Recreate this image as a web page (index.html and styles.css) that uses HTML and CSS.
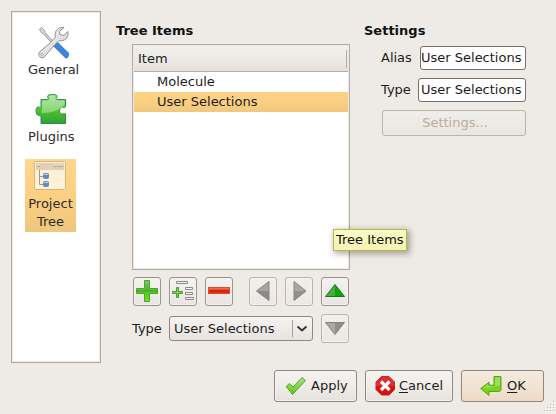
FILE: index.html
```html
<!DOCTYPE html>
<html lang="en">
<head>
<meta charset="utf-8">
<title>Settings</title>
<link rel="stylesheet" href="styles.css">
</head>
<body>
<div class="dialog">
  <div class="content">
    <nav class="sidebar">
      <div class="nav-item">
        <svg width="32" height="32" viewBox="0 0 32 32">
          <defs>
            <linearGradient id="blue" x1="0" y1="1" x2="1" y2="0"><stop offset="0" stop-color="#174f96"/><stop offset=".5" stop-color="#3c8be0"/><stop offset="1" stop-color="#2464b4"/></linearGradient>
            <linearGradient id="steel" x1="0" y1="0" x2="1" y2="1"><stop offset="0" stop-color="#f8f8f8"/><stop offset="1" stop-color="#cfcfcf"/></linearGradient>
          </defs>
          <path d="M3.500 0.500L1.500 2.200L3.500 5.500L5.500 6.700L15 17.500L16.500 16L7 5.500L6 3Z" fill="#ddd" stroke="#8c8c8c" stroke-width=".9"/>
          <path d="M14.500 18L18.500 14.300L30.500 26Q31.500 29 29 31L27.500 31Z" fill="url(#blue)" stroke="#2a68b0" stroke-width=".6"/>
          <path d="M26 .7C21 -.5 15.500 4 17.500 10L12 16L1.500 25C-1 28.500 3 32.500 6.300 29.800L16 18.500L21 13.500C26.500 15 31.500 10 29.700 4.500L26 8.500L21.800 7.500L21.500 4Z" fill="url(#steel)" stroke="#919191"/>
          <circle cx="4" cy="27.500" r="1.300" fill="#eee" stroke="#999" stroke-width=".7"/>
        </svg>
        <span>General</span>
      </div>
      <div class="nav-item">
        <svg width="32" height="32" viewBox="0 0 32 32">
          <defs><linearGradient id="puz" x1="0" y1="0" x2="0" y2="1"><stop offset="0" stop-color="#8fd98a"/><stop offset=".5" stop-color="#54c432"/><stop offset="1" stop-color="#2ca03a"/></linearGradient></defs>
          <path d="M6 5.500H12C15 5.500 12.500 4 12.500 2.500C13 -.5 22 -.5 22 2.500C22 4 20 5.500 22.500 5.500H30.500V12.500C29.500 14.500 28 12.700 26.500 13.200C24 14.500 24 19 26.500 20C28.500 20.500 29.500 18.700 30.500 20V29.500H6V22C5 20.500 3 22.500 1.700 20C.5 17 .8 13.500 3 13C5 12.700 5.500 14.500 6 13.500Z" fill="url(#puz)" stroke="#2a9034"/>
          <path d="M7 6.500H13C16 5.500 13 3 15 2C19 .8 21.500 2 20 4.500L22 6.500H29.500V11C24 16 18 19 7 19Z" fill="#fff" opacity=".35"/>
        </svg>
        <span>Plugins</span>
      </div>
      <div class="nav-item selected">
        <svg width="32" height="32" viewBox="0 0 32 32">
          <rect x=".5" y=".5" width="31" height="28" rx="1" fill="#fff0d8" stroke="#d8b47c"/>
          <rect x="2" y="2" width="28" height="7" fill="#dfd0b5"/>
          <path d="M3.500 3.500h3M19.500 3.500h3M23.500 3.500h3M27 3.500h2" stroke="#eee0c6"/>
          <path d="M3.500 5.500h3M19.500 5.500h3M23.500 5.500h3M27 5.500h2" stroke="#b8a98e"/>
          <path d="M5.500 9V23.500H10M5.500 15.500H10" fill="none" stroke="#a39983"/>
          <rect x="9.500" y="12.500" width="5" height="5" rx="1" fill="#5d8cc4" stroke="#6690bd"/><path d="M10 13.500h4" stroke="#b8d1e8"/>
          <rect x="9.500" y="20.500" width="5" height="5" rx="1" fill="#5d8cc4" stroke="#6690bd"/><path d="M10 21.500h4" stroke="#b8d1e8"/>
        </svg>
        <span>Project<br>Tree</span>
      </div>
    </nav>

    <section class="tree-items">
      <h2>Tree Items</h2>
      <div class="tree-body">
        <div class="tree">
          <div class="tree-head">Item</div>
          <div class="tree-row">Molecule</div>
          <div class="tree-row active">User Selections</div>
        </div>
        <div class="tools">
          <button class="tool"><svg width="24" height="24" viewBox="0 0 24 24"><defs><linearGradient id="g" x1="0" y1="0" x2="0" y2="1"><stop offset="0" stop-color="#6dc85a"/><stop offset=".5" stop-color="#3fae23"/><stop offset=".55" stop-color="#52ca16"/><stop offset="1" stop-color="#72e01c"/></linearGradient></defs><path d="M9.500 1.500h5v8h8v5h-8v8h-5v-8h-8v-5h8z" fill="url(#g)" stroke="#4aa238"/><path d="M10.500 10V2.500h3v8h8M10.500 10.500H2.500" fill="none" stroke="#a0de90" opacity=".35"/></svg></button>
          <button class="tool"><svg width="24" height="24" viewBox="0 0 24 24"><g fill="#f6f6f6" stroke="#8b8b8b"><path d="M5.500 2.500h11v2h-11zM14.500 8.500h7v2h-7zM14.500 13.500h7v2h-7zM14.500 18.500h8v2h-8z"/></g><path d="M5.500 8.500h2v4h4v2h-4v4h-2v-4h-4v-2h4z" fill="#79cf4a" stroke="#4c9c38"/></svg></button>
          <button class="tool"><svg width="24" height="24" viewBox="0 0 24 24"><defs><linearGradient id="r" x1="0" y1="0" x2="0" y2="1"><stop offset="0" stop-color="#f08060"/><stop offset=".45" stop-color="#e34b2a"/><stop offset=".5" stop-color="#d81e06"/><stop offset="1" stop-color="#f03010"/></linearGradient></defs><rect x="1.500" y="8.500" width="21" height="6" fill="url(#r)" stroke="#d64c35"/></svg></button>
          <span class="spacer"></span>
          <button class="tool off"><svg width="24" height="24" viewBox="0 0 24 24"><path d="M5.500 12L18 2.500v19z" fill="#a7a5a2"/><path d="M5.500 12H18v9.500z" fill="#8d8b88"/><path d="M5.500 12L18 2.500v19z" fill="none" stroke="#858380"/></svg></button>
          <button class="tool off"><svg width="24" height="24" viewBox="0 0 24 24"><path d="M19 12L7 2.500v19z" fill="#aaa8a5"/><path d="M19 12H7v9.500z" fill="#92908d"/><path d="M19 12L7 2.500v19z" fill="none" stroke="#858380"/></svg></button>
          <button class="tool"><svg width="24" height="24" viewBox="0 0 24 24"><path d="M12 5.500L2.500 17.500H12z" fill="#4caa45"/><path d="M12 5.500L21.500 17.500H12z" fill="#08a804"/><path d="M12 5.500L21.500 17.500h-19z" fill="none" stroke="#187c16"/></svg></button>
        </div>
        <div class="type-row">
          <label>Type</label>
          <div class="combo"><span>User Selections</span><svg width="20" height="17" viewBox="0 0 20 17"><path d="M.5 0v17" stroke="#aaa29a"/><path d="M5.500 6.500l4.500 4L14.500 6.500" fill="none" stroke="#333" stroke-width="1.800"/></svg></div>
          <button class="tool off"><svg width="24" height="24" viewBox="0 0 24 24"><path d="M12 18.500L2.500 6.500H12z" fill="#aaa8a5"/><path d="M12 18.500L21.500 6.500H12z" fill="#92908d"/><path d="M12 18.500L21.500 6.500h-19z" fill="none" stroke="#858380"/></svg></button>
        </div>
      </div>
    </section>

    <section class="settings">
      <h2>Settings</h2>
      <div class="fields">
        <div class="field alias"><label>Alias</label><div class="input">User Selections</div></div>
        <div class="field type"><label>Type</label><div class="input">User Selections</div></div>
        <button class="settings-button">Settings...</button>
      </div>
    </section>
  </div>

  <footer class="actions">
    <button class="action apply"><svg width="22" height="22" viewBox="0 0 22 22"><defs><linearGradient id="c" x1="0" y1="0" x2="0" y2="1"><stop offset="0" stop-color="#a8e388"/><stop offset="1" stop-color="#5fc60d"/></linearGradient></defs><path d="M1.200 11.500L4.500 8.500L8 12L17 2.500L20.500 5.500L7.500 19.500Z" fill="url(#c)" stroke="#55a33c"/></svg><span>Apply</span></button>
    <button class="action cancel"><svg width="22" height="22" viewBox="0 0 22 22"><path d="M6.500 1.500h7.500l5.500 5.500v7.500l-5.500 5.500h-7.500l-5.500-5.500v-7.500z" fill="#db1010" stroke="#c31b1b"/><path d="M6.500 1.500h7.500l5.500 5.500v4h-18.500v-4z" fill="#fff" opacity=".13"/><path d="M6 6.500L14.500 15M14.500 6.500L6 15" stroke="#fff" stroke-width="3.200"/></svg><span><u>C</u>ancel</span></button>
    <button class="action ok"><svg width="22" height="22" viewBox="0 0 22 22"><path d="M14 1.500h7V14Q21 16.500 18.500 16.500H9V20.500L.7 13.500L9 7.200V10.200H14Z" fill="#7bd41b" stroke="#4da421"/><path d="M15 2.500h5v8L8 12.500l-5 1l5-4.500v2h7z" fill="#b1e88b" opacity=".6"/></svg><span><u>O</u>K</span></button>
  </footer>
</div>
<div class="tooltip">Tree Items</div>
<svg class="grip" width="11" height="11" viewBox="0 0 11 11"><g fill="#fff"><path d="M10 1h1v1h-1zM7 4h1v1h-1zM10 4h1v1h-1zM4 7h1v1h-1zM7 7h1v1h-1zM10 7h1v1h-1zM1 10h1v1h-1zM4 10h1v1h-1zM7 10h1v1h-1zM10 10h1v1h-1z"/></g><g fill="#bdb8b2"><path d="M9 0h1v1h-1zM6 3h1v1h-1zM9 3h1v1h-1zM3 6h1v1h-1zM6 6h1v1h-1zM9 6h1v1h-1zM0 9h1v1h-1zM3 9h1v1h-1zM6 9h1v1h-1zM9 9h1v1h-1z"/></g></svg>
</body>
</html>
```
FILE: styles.css
```css
* { box-sizing: border-box; }
body {
  margin: 0;
  width: 556px;
  height: 414px;
  overflow: hidden;
  position: relative;
  background: #eeebe6;
  color: #1c1c1c;
  font: 13px/18px "DejaVu Sans", sans-serif;
}
svg { display: block; flex: none; }
h2 { margin: 0; font-size: 13px; line-height: 18px; font-weight: bold; color: #111; }
button { margin: 0; padding: 0; font: inherit; color: inherit; }
.dialog { padding: 11px 12px 0 11px; }
.content { display: flex; height: 352px; }

.sidebar {
  width: 90px;
  border: 1px solid #b3aca5;
  box-shadow: inset 0 0 0 1px #ece8e4;
  background: #fff;
  padding: 13px 0 0 13px;
  display: flex;
  flex-direction: column;
  align-items: flex-start;
  gap: 12px;
}
.nav-item {
  display: flex;
  flex-direction: column;
  align-items: center;
  gap: 2px;
  padding: 2px 3px 1px;
  text-align: center;
  color: #2c2c2c;
}
.nav-item span { white-space: nowrap; }
.nav-item.selected { width: 51px; padding: 2px 2px 1px; background: linear-gradient(#ffd68c, #fdd083 50%, #edc67c); }
.nav-item.selected svg { margin-right: 2px; }

.tree-items { width: 234px; margin-left: 15px; padding-top: 11px; }
.tree-body { margin-left: 16px; }
.tree {
  height: 226px;
  margin-top: 4px;
  border: 1px solid #b3aca5;
  padding: 1px;
  background: #fff;
  box-shadow: inset 0 0 0 1px #ece8e4;
}
.tree-head {
  height: 26px;
  padding-left: 4px;
  line-height: 26px;
  border-bottom: 1px solid #b8aea5;
  background: linear-gradient(#b8aba0, #b8aba0) right 1px top 4px / 1px 18px no-repeat, linear-gradient(#f3f1ee, #ece8e4 60%, #e6e0db);
}
.tree-row { height: 20px; line-height: 19px; padding-left: 23px; }
.tree-row.active { background: linear-gradient(#fdd286, #fbcf82 50%, #efc87e); }

.tools { display: flex; gap: 8px; margin: 7px 0 0 1px; }
.spacer { width: 0; }
.tool {
  width: 28px;
  height: 29px;
  display: flex;
  align-items: flex-start;
  justify-content: center;
  border: 1px solid #9b948d;
  border-radius: 3px;
  background: linear-gradient(#f5f3f1, #eeebe8 50%, #e9e5e1);
  box-shadow: inset 0 0 0 1px #f4f2f0;
}
.tool svg { margin-top: 1px; }
.tool.off { border-color: #bdb3ab; background: linear-gradient(#f1efec, #ece8e4); }
.type-row { display: flex; align-items: center; margin-top: 8px; }
.type-row label { width: 37px; }
.combo {
  width: 144px;
  height: 25px;
  margin-right: 8px;
  padding: 0 0 0 4px;
  display: flex;
  align-items: center;
  justify-content: space-between;
  border: 1px solid #8f8780;
  border-radius: 3px;
  background: linear-gradient(#f5f3f1, #eeebe8 50%, #e7e2de);
}

.settings { margin-left: 14px; padding-top: 11px; width: 162px; }
.fields { margin: 6px 0 0 17px; display: flex; flex-direction: column; gap: 8px; }
.field { display: flex; justify-content: space-between; align-items: center; }
.input {
  width: 106px;
  height: 24px;
  padding-left: 0;
  line-height: 21px;
  white-space: nowrap;
  overflow: hidden;
  border: 1px solid #7c7168;
  border-radius: 3px;
  background: #fff;
}
.type .input { width: 108px; padding-left: 2px; }
.settings-button {
  height: 26px;
  margin-left: 1px;
  padding-left: 2px;
  border: 1px solid #bdb3ab;
  border-radius: 3px;
  background: linear-gradient(#f0eeeb, #eeebe7 40%, #e9e5e1);
  color: #b8aca0;
}

.actions { display: flex; justify-content: flex-end; gap: 8px; margin-top: 7px; }
.action {
  width: 83px;
  height: 32px;
  padding: 0 0 0 10px;
  display: flex;
  align-items: center;
  gap: 4px;
  border: 1px solid #8f8780;
  border-radius: 3px;
  background: linear-gradient(#f5f3f1, #efece9 50%, #e6e1dc);
  box-shadow: inset 0 0 0 1px #f4f2f0;
}
.action.cancel { width: 88px; padding-left: 9px; gap: 2px; }
.action.ok { padding-left: 18px; gap: 5px; background: linear-gradient(#f4eade, #f1e3d3 55%, #eedac5); box-shadow: none; }
.action u { text-underline-offset: 2px; text-decoration-skip-ink: none; }

.tooltip {
  position: absolute;
  left: 333px;
  top: 229px;
  width: 74px;
  height: 22px;
  padding-left: 2px;
  line-height: 19px;
  white-space: nowrap;
  border: 1px solid #b9b845;
  background: linear-gradient(#fafac4, #f4f3b4);
  color: #111;
  box-shadow: 2px 2px 6px 1px rgba(60, 50, 40, .4);
}
.grip { position: absolute; left: 544px; top: 401px; }
```
